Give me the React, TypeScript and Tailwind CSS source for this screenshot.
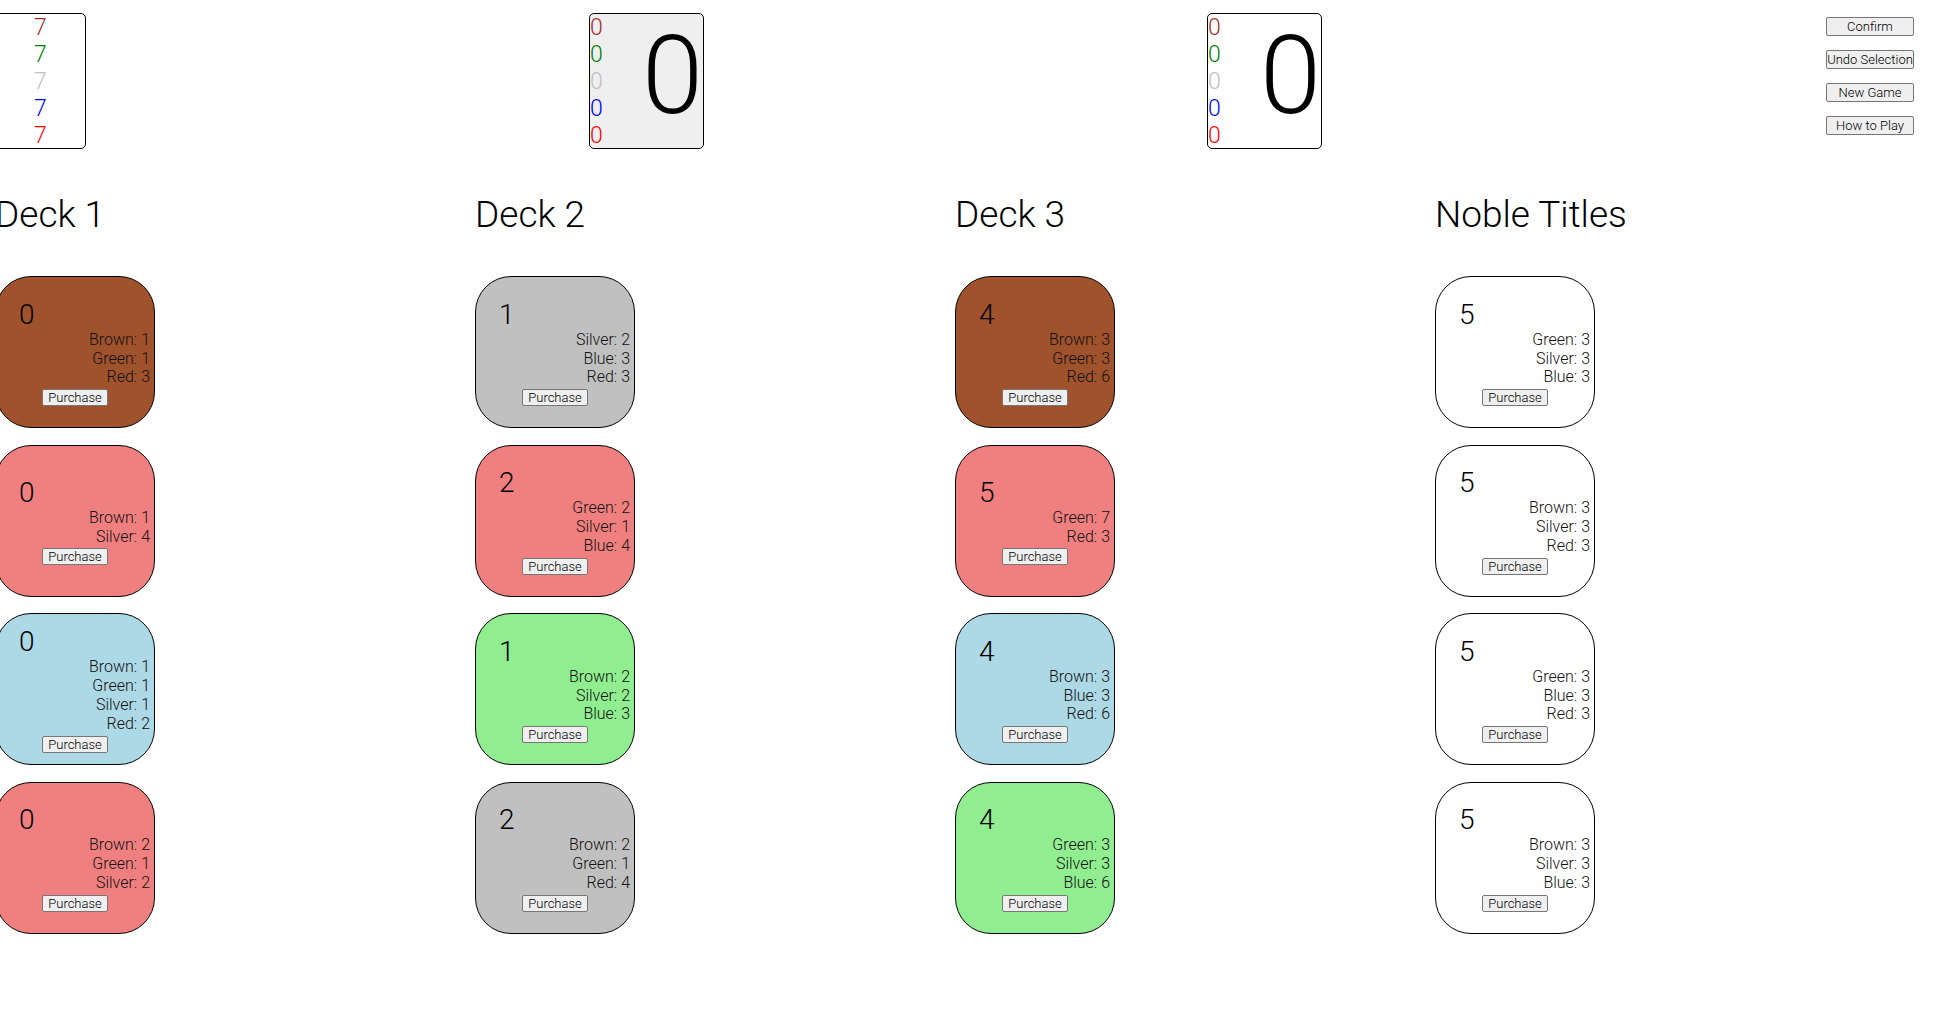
type Gem = 'Brown' | 'Green' | 'Silver' | 'Blue' | 'Red';

type CardData = {
  points: number;
  bg: string;
  cost: [Gem, number][];
};

const GEM_TEXT: Record<Gem, string> = {
  Brown: 'text-[#a52a2a]',
  Green: 'text-[#008000]',
  Silver: 'text-[#c0c0c0]',
  Blue: 'text-[#0000ff]',
  Red: 'text-[#ff0000]',
};

const GEMS: Gem[] = ['Brown', 'Green', 'Silver', 'Blue', 'Red'];

// columns of the board
const DECKS: { title: string; cards: CardData[] }[] = [
  {
    title: 'Deck 1',
    cards: [
      { points: 0, bg: 'bg-[#a0522d]', cost: [['Brown', 1], ['Green', 1], ['Red', 3]] },
      { points: 0, bg: 'bg-[#f08080]', cost: [['Brown', 1], ['Silver', 4]] },
      { points: 0, bg: 'bg-[#add8e6]', cost: [['Brown', 1], ['Green', 1], ['Silver', 1], ['Red', 2]] },
      { points: 0, bg: 'bg-[#f08080]', cost: [['Brown', 2], ['Green', 1], ['Silver', 2]] },
    ],
  },
  {
    title: 'Deck 2',
    cards: [
      { points: 1, bg: 'bg-[#c0c0c0]', cost: [['Silver', 2], ['Blue', 3], ['Red', 3]] },
      { points: 2, bg: 'bg-[#f08080]', cost: [['Green', 2], ['Silver', 1], ['Blue', 4]] },
      { points: 1, bg: 'bg-[#90ee90]', cost: [['Brown', 2], ['Silver', 2], ['Blue', 3]] },
      { points: 2, bg: 'bg-[#c0c0c0]', cost: [['Brown', 2], ['Green', 1], ['Red', 4]] },
    ],
  },
  {
    title: 'Deck 3',
    cards: [
      { points: 4, bg: 'bg-[#a0522d]', cost: [['Brown', 3], ['Green', 3], ['Red', 6]] },
      { points: 5, bg: 'bg-[#f08080]', cost: [['Green', 7], ['Red', 3]] },
      { points: 4, bg: 'bg-[#add8e6]', cost: [['Brown', 3], ['Blue', 3], ['Red', 6]] },
      { points: 4, bg: 'bg-[#90ee90]', cost: [['Green', 3], ['Silver', 3], ['Blue', 6]] },
    ],
  },
  {
    title: 'Noble Titles',
    cards: [
      { points: 5, bg: 'bg-white', cost: [['Green', 3], ['Silver', 3], ['Blue', 3]] },
      { points: 5, bg: 'bg-white', cost: [['Brown', 3], ['Silver', 3], ['Red', 3]] },
      { points: 5, bg: 'bg-white', cost: [['Green', 3], ['Blue', 3], ['Red', 3]] },
      { points: 5, bg: 'bg-white', cost: [['Brown', 3], ['Silver', 3], ['Blue', 3]] },
    ],
  },
];

function GemColumn({ value }: { value: number }) {
  return (
    <div className="flex flex-col">
      {GEMS.map((g) => (
        <span key={g} className={`text-[23px] leading-[27px] ${GEM_TEXT[g]}`}>
          {value}
        </span>
      ))}
    </div>
  );
}

function Bank() {
  return (
    <div className="w-[115px] h-[136px] mt-[13px] border border-black rounded-[5px] bg-white flex pl-[62px]">
      <GemColumn value={7} />
    </div>
  );
}

function PlayerBox({ active }: { active?: boolean }) {
  return (
    <div
      className={`w-[115px] h-[136px] mt-[13px] border border-black rounded-[5px] flex justify-between items-start ${
        active ? 'bg-[#efefef]' : 'bg-white'
      }`}
    >
      <GemColumn value={0} />
      <span className="text-[110px] leading-[110px] mt-[7px]">0</span>
    </div>
  );
}

function MenuButton({ label }: { label: string }) {
  return (
    <button className="w-[88px] h-[19px] bg-[#efefef] border border-[#767676] rounded-[2px] text-[13px] leading-none text-black font-light whitespace-nowrap">
      {label}
    </button>
  );
}

function GameCard({ card }: { card: CardData }) {
  return (
    <div className={`w-[160px] h-[152px] border border-black rounded-[36px] flex flex-col justify-center ${card.bg}`}>
      <div className="text-[28px] leading-[33px] pl-[23px]">{card.points}</div>
      <div className="flex flex-col items-end pr-[4px]">
        {card.cost.map(([gem, n]) => (
          <span key={gem} className="text-[16px] leading-[18.9px] text-[#111]">
            {gem}: {n}
          </span>
        ))}
      </div>
      <div className="flex justify-center mt-[2px]">
        <button className="h-[17px] px-[5px] bg-[#efefef] border border-[#767676] rounded-[2px] text-[13px] leading-none text-black font-light">
          Purchase
        </button>
      </div>
    </div>
  );
}

export default function App() {
  return (
    <div
      className="w-[1936px] h-[1024px] overflow-hidden bg-white text-black font-light"
      style={{ fontFamily: '"Roboto Light", Roboto, "Liberation Sans", sans-serif' }}
    >
      {/* players + menu */}
      <div className="flex ml-[-29px]">
        <div className="w-[618px]">
          <Bank />
        </div>
        <div className="w-[618px]">
          <PlayerBox active />
        </div>
        <div className="w-[619px]">
          <PlayerBox />
        </div>
        <div className="flex flex-col gap-[14px] mt-[17px]">
          <MenuButton label="Confirm" />
          <MenuButton label="Undo Selection" />
          <MenuButton label="New Game" />
          <MenuButton label="How to Play" />
        </div>
      </div>

      {/* decks */}
      <div className="flex ml-[-5px] mt-[44px]">
        {DECKS.map((deck) => (
          <div key={deck.title} className="w-[480px] shrink-0">
            <h2 className="text-[37px] leading-[43px] font-light">{deck.title}</h2>
            <div className="flex flex-col gap-[16.5px] mt-[40px]">
              {deck.cards.map((c, i) => (
                <GameCard key={i} card={c} />
              ))}
            </div>
          </div>
        ))}
      </div>
    </div>
  );
}
